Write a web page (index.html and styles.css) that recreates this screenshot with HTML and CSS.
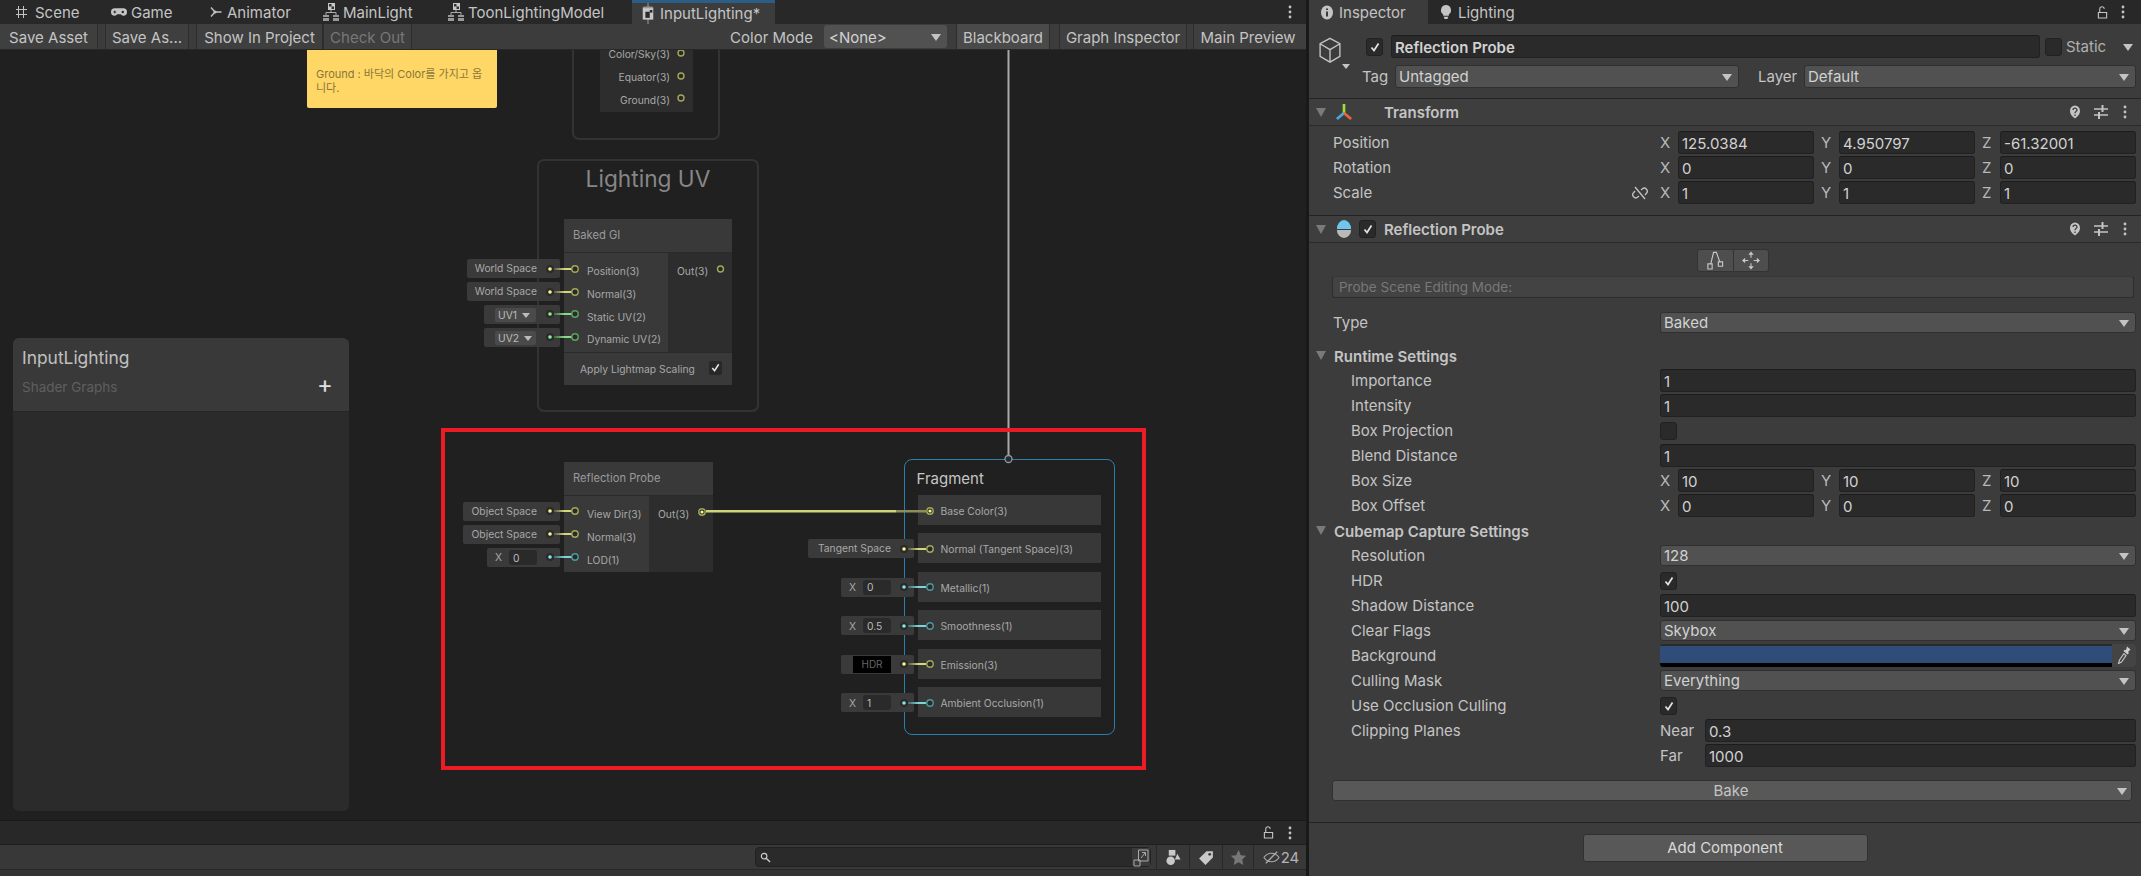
FILE: index.html

```html
<!DOCTYPE html>
<html lang="en">
<head>
    <meta charset="UTF-8">
    <title>InputLighting - Shader Graph</title>
    <link rel="stylesheet" href="styles.css">
</head>
<body>
<svg class="defs" width="0" height="0">
    <defs>
        <symbol id="i-dots" viewBox="0 0 4 14"><circle cx="2" cy="2" r="1.4"/><circle cx="2" cy="7" r="1.4"/><circle cx="2" cy="12" r="1.4"/></symbol>
        <symbol id="i-lock" viewBox="0 0 12 14"><path d="M1.5 6.5h9v6h-9zM3 6.5V3a2.5 2.5 0 0 1 5-.5" fill="none" stroke="currentColor" stroke-width="1.2"/></symbol>
        <symbol id="i-help" viewBox="0 0 12 14"><path d="M6 .5a5 5.500 0 0 1 5 5.500c0 3.500-2.500 5.500-5 7.500-2.500-2-5-4-5-7.500A5 5.500 0 0 1 6 .5z" fill="#c4c4c4"/><path d="M4 5a2 1.800 0 1 1 3 1.500c-.8.5-1 .9-1 1.700M6 9.500V11" fill="none" stroke="#3e3e3e" stroke-width="1.3"/></symbol>
        <symbol id="i-sliders" viewBox="0 0 14 16"><path d="M0 5h14M0 11h14" stroke="#c4c4c4" stroke-width="1.3"/><path d="M8.500 1v7M5 8v7" stroke="#c4c4c4" stroke-width="2"/></symbol>
        <symbol id="i-graph" viewBox="0 0 16 20"><path d="M5 1h7v7H5z" fill="#c8c8c8"/><path d="M6 2h2.500v2.500H6zM8.500 4.500H11V7H8.500z" fill="#333"/><path d="M8 8v2.500M3 13v-2.500h10V13" fill="none" stroke="#aaa"/><path d="M0 13h6v2H0zM0 16h6v3H0zM10 13h6v2h-6zM10 16h6v3h-6z" fill="#999"/></symbol>
        <symbol id="i-check" viewBox="0 0 12 12"><path d="M2.500 6.500 5 9.500l4.500-7" fill="none" stroke="#e4e4e4" stroke-width="1.7"/></symbol>
        <linearGradient id="w-y"><stop offset="0" stop-color="#5a5a40"/><stop offset=".6" stop-color="#d6d67e"/></linearGradient>
        <linearGradient id="w-c"><stop offset="0" stop-color="#3f6a6c"/><stop offset=".6" stop-color="#7fd3d6"/></linearGradient>
        <linearGradient id="w-g"><stop offset="0" stop-color="#3f6a40"/><stop offset=".6" stop-color="#86dc86"/></linearGradient>
    </defs>
</svg>

<div class="app">
    <div class="graph-win">
        <div class="tabs">
            <div class="tab">
                <svg class="tab-ico" viewBox="0 0 16 16"><path d="M3.500 2v12M8.500 2v12M1 5.500h11M1 10.500h11" stroke="#c4c4c4" fill="none"/></svg>
                Scene
            </div>
            <div class="tab">
                <svg class="tab-ico" viewBox="0 0 17 16"><path d="M4 4h9a4 4 0 0 1 0 8c-1.500 0-2-1.500-3-1.500H7C6 10.500 5.500 12 4 12a4 4 0 0 1 0-8z" fill="#c4c4c4"/><path d="M2.500 8h3M4 6.500v3" stroke="#282828"/><circle cx="12.5" cy="8" r="1.3" fill="#282828"/></svg>
                Game
            </div>
            <div class="tab">
                <svg class="tab-ico" viewBox="0 0 16 16"><path d="M4 3.500 8 8l-4 4.500M8 8h6.500" fill="none" stroke="#c4c4c4" stroke-width="1.4"/><circle cx="8" cy="8" r="1.5" fill="#c4c4c4"/></svg>
                Animator
            </div>
            <div class="tab"><svg class="tab-ico tab-ico-tall"><use href="#i-graph"/></svg>MainLight</div>
            <div class="tab"><svg class="tab-ico tab-ico-tall"><use href="#i-graph"/></svg>ToonLightingModel</div>
            <div class="tab tab-active">
                <svg class="tab-ico tab-ico-tall" viewBox="0 0 16 24"><path d="M8 0v24" stroke="#aaa"/><path d="M2 5h12v14H2z" fill="#c8c8c8"/><path d="M3 4h10v2H3z" fill="#999"/><path d="M5 10h5v7H5z" fill="#2b2b2b"/><path d="M10 8h3v3h-3z" fill="#2b2b2b"/></svg>
                InputLighting*
            </div>
            <svg class="tab-dots"><use href="#i-dots"/></svg>
        </div>

        <div class="graph-bar">
            <div class="bar-btn btn-save">Save Asset</div>
            <div class="bar-btn btn-saveas">Save As...</div>
            <div class="bar-btn btn-show">Show In Project</div>
            <div class="bar-btn btn-check">Check Out</div>
            <div class="bar-space"></div>
            <div class="color-label">Color Mode</div>
            <div class="color-drop">&lt;None&gt;<span class="arrow"></span></div>
            <div class="bar-btn btn-black">Blackboard</div>
            <div class="bar-btn btn-insp">Graph Inspector</div>
            <div class="bar-btn btn-prev">Main Preview</div>
        </div>

        <div class="canvas">
            <div class="sticky">니다.<br><br>Ground : 바닥의 Color를 가지고 옵<br>니다.</div>

            <div class="group group-top"></div>
            <div class="node node-top">
                <div class="top-port">Color/Sky(3)</div>
                <div class="top-port">Equator(3)</div>
                <div class="top-port">Ground(3)</div>
            </div>

            <div class="group group-uv"><div class="group-title">Lighting UV</div></div>
            <div class="node node-baked">
                <div class="node-title">Baked GI</div>
                <div class="node-ports">
                    <div class="ports-in ports-in-baked">
                        <div class="port-label">Position(3)</div>
                        <div class="port-label">Normal(3)</div>
                        <div class="port-label">Static UV(2)</div>
                        <div class="port-label">Dynamic UV(2)</div>
                    </div>
                    <div class="ports-out"><div class="port-label">Out(3)</div></div>
                </div>
                <div class="node-foot">Apply Lightmap Scaling<span class="mini-check"><svg><use href="#i-check"/></svg></span></div>
            </div>
            <div class="inl-col inl-baked">
                <div class="inl">World Space</div>
                <div class="inl">World Space</div>
                <div class="inl inl-x"><span class="uv-drop">UV1<span class="mini-arrow"></span></span></div>
                <div class="inl inl-x"><span class="uv-drop">UV2<span class="mini-arrow"></span></span></div>
            </div>

            <div class="node node-probe">
                <div class="node-title">Reflection Probe</div>
                <div class="node-ports">
                    <div class="ports-in ports-in-probe">
                        <div class="port-label">View Dir(3)</div>
                        <div class="port-label">Normal(3)</div>
                        <div class="port-label">LOD(1)</div>
                    </div>
                    <div class="ports-out"><div class="port-label">Out(3)</div></div>
                </div>
            </div>
            <div class="inl-col inl-probe">
                <div class="inl">Object Space</div>
                <div class="inl">Object Space</div>
                <div class="inl inl-x">X<span class="inl-field">0</span></div>
            </div>

            <div class="fragment">
                <div class="frag-title">Fragment</div>
                <div class="frag-row">Base Color(3)</div>
                <div class="frag-row">Normal (Tangent Space)(3)</div>
                <div class="frag-row">Metallic(1)</div>
                <div class="frag-row">Smoothness(1)</div>
                <div class="frag-row">Emission(3)</div>
                <div class="frag-row">Ambient Occlusion(1)</div>
            </div>
            <div class="inl-col inl-frag">
                <div class="inl">Tangent Space</div>
                <div class="inl inl-x">X<span class="inl-field">0</span></div>
                <div class="inl inl-x">X<span class="inl-field">0.5</span></div>
                <div class="inl inl-x"><span class="hdr">HDR</span></div>
                <div class="inl inl-x">X<span class="inl-field">1</span></div>
            </div>

            <svg class="wires" viewBox="0 0 1306 770">
                <rect x="1007.5" y="0" width="2" height="405" fill="#a8a8a8"/>
                <circle cx="1008.5" cy="409" r="3.5" fill="#2a2a2a" stroke="#8a9aa0" stroke-width="1.3"/>

                <g class="rings-y"><circle cx="681" cy="3" r="3"/><circle cx="681" cy="26" r="3"/><circle cx="681" cy="48" r="3"/><circle cx="720.5" cy="219" r="3"/></g>

                <rect x="554" y="218" width="18" height="2" fill="url(#w-y)"/>
                <rect x="554" y="241" width="18" height="2" fill="url(#w-y)"/>
                <rect x="554" y="263" width="18" height="2" fill="url(#w-g)"/>
                <rect x="554" y="286" width="18" height="2" fill="url(#w-g)"/>
                <rect x="554" y="460" width="18" height="2" fill="url(#w-y)"/>
                <rect x="554" y="483" width="18" height="2" fill="url(#w-y)"/>
                <rect x="554" y="506" width="18" height="2" fill="url(#w-c)"/>
                <rect x="908" y="498" width="18" height="2" fill="url(#w-y)"/>
                <rect x="908" y="536" width="18" height="2" fill="url(#w-c)"/>
                <rect x="908" y="575" width="18" height="2" fill="url(#w-c)"/>
                <rect x="908" y="613" width="18" height="2" fill="url(#w-y)"/>
                <rect x="908" y="652" width="18" height="2" fill="url(#w-c)"/>
                <rect x="706" y="460" width="190" height="2.5" fill="#d2d27c"/>
                <rect x="896" y="460" width="30" height="2.5" fill="#8e8e5c"/>

                <g class="dots">
                    <circle cx="550" cy="219" r="4"/><circle cx="550" cy="242" r="4"/><circle cx="550" cy="264" r="4"/><circle cx="550" cy="287" r="4"/>
                    <circle cx="550" cy="461" r="4"/><circle cx="550" cy="484" r="4"/><circle cx="550" cy="507" r="4"/>
                    <circle cx="904" cy="499" r="4"/><circle cx="904" cy="537" r="4"/><circle cx="904" cy="576" r="4"/><circle cx="904" cy="614" r="4"/><circle cx="904" cy="653" r="4"/>
                </g>
                <g class="in-y"><circle cx="550" cy="219" r="1.8"/><circle cx="550" cy="242" r="1.8"/><circle cx="550" cy="461" r="1.8"/><circle cx="550" cy="484" r="1.8"/><circle cx="904" cy="499" r="1.8"/><circle cx="904" cy="614" r="1.8"/></g>
                <g class="in-c"><circle cx="550" cy="507" r="1.8"/><circle cx="904" cy="537" r="1.8"/><circle cx="904" cy="576" r="1.8"/><circle cx="904" cy="653" r="1.8"/></g>
                <g class="in-g"><circle cx="550" cy="264" r="1.8"/><circle cx="550" cy="287" r="1.8"/></g>

                <g class="rings-y"><circle cx="575" cy="219" r="3.2"/><circle cx="575" cy="242" r="3.2"/><circle cx="575" cy="461" r="3.2"/><circle cx="575" cy="484" r="3.2"/><circle cx="930" cy="499" r="3.2"/><circle cx="930" cy="614" r="3.2"/><circle cx="702" cy="462" r="3.2"/><circle cx="930" cy="461" r="3.2"/></g>
                <g class="rings-g"><circle cx="575" cy="264" r="3.2"/><circle cx="575" cy="287" r="3.2"/></g>
                <g class="rings-c"><circle cx="575" cy="507" r="3.2"/><circle cx="930" cy="537" r="3.2"/><circle cx="930" cy="576" r="3.2"/><circle cx="930" cy="653" r="3.2"/></g>
                <g class="in-y"><circle cx="702" cy="462" r="1.6"/><circle cx="930" cy="461" r="1.6"/></g>
            </svg>

            <div class="blackboard">
                <div class="bb-head">
                    <div class="bb-title">InputLighting</div>
                    <div class="bb-sub">Shader Graphs<span class="bb-plus">+</span></div>
                </div>
            </div>

            <div class="red-box"></div>
        </div>

        <div class="project">
            <div class="project-tabs">
                <svg class="pr-lock"><use href="#i-lock"/></svg>
                <svg class="pr-dots"><use href="#i-dots"/></svg>
            </div>
            <div class="project-bar">
                <div class="search">
                    <svg class="search-ico" viewBox="0 0 12 12"><circle cx="4.5" cy="4.5" r="3" fill="none" stroke="#ccc" stroke-width="1.3"/><path d="m7 7 4 4" stroke="#ccc" stroke-width="1.5"/></svg>
                    <span class="search-end"><svg viewBox="0 0 16 18"><path d="M5.500 1H15v11H5.500zM1 11h6v6H1z" fill="none" stroke="#aaa"/><path d="M8 9l4-5M9 3.500h3.500V7" fill="none" stroke="#aaa"/></svg></span>
                </div>
                <div class="seg seg-a"><svg viewBox="0 0 16 18"><path d="M3 1h7v6H3z" fill="#c8c8c8"/><circle cx="5" cy="12.5" r="4.5" fill="#c8c8c8"/><path d="m12 5 3.500 6h-6z" fill="#c8c8c8"/></svg></div>
                <div class="seg seg-a"><svg viewBox="0 0 16 16"><path d="M8 2h6v6l-7 7-6-6z" fill="#c8c8c8"/><circle cx="11" cy="5" r="1.3" fill="#3a3a3a"/></svg></div>
                <div class="seg seg-b"><svg viewBox="0 0 16 16"><path d="m8 1 2.200 4.800 5 .6-3.700 3.400 1 5.200L8 12.400 3.500 15l1-5.200L.8 6.400l5-.6z" fill="#777"/></svg></div>
                <div class="seg seg-c"><svg viewBox="0 0 18 16"><path d="M1 8c2-3 5-4.500 8-4.500S15 5 17 8c-2 3-5 4.500-8 4.500S3 11 1 8z" fill="none" stroke="#aaa" stroke-width="1.2"/><path d="M3 14 15 2" stroke="#aaa" stroke-width="1.4"/></svg>24</div>
            </div>
            <div class="project-rest"></div>
        </div>
    </div>

    <div class="inspector">
        <div class="insp-tabs">
            <div class="insp-tab insp-tab-active">
                <svg class="insp-tab-ico" viewBox="0 0 12 14"><path d="M6 0a6 7 0 1 1 0 14A6 7 0 0 1 6 0z" fill="#c4c4c4"/><path d="M6 6v5M6 3v1.600" stroke="#3c3c3c" stroke-width="2"/></svg>
                Inspector
            </div>
            <div class="insp-tab">
                <svg class="insp-tab-ico" viewBox="0 0 12 16"><path d="M6 0a5.500 5.500 0 0 1 3 10v1.500H3V10A5.500 5.500 0 0 1 6 0z" fill="#c4c4c4"/><path d="M3.500 12.500h5l-1 2.500h-3z" fill="#c4c4c4"/></svg>
                Lighting
            </div>
            <svg class="ins-lock"><use href="#i-lock"/></svg>
            <svg class="ins-dots"><use href="#i-dots"/></svg>
        </div>

        <div class="go-head">
            <svg class="cube" viewBox="0 0 26 30"><path d="M13 1.500 24 7.500v14L13 28 2 21.500v-14zM2 7.500 13 14l11-6.500M13 14v14" fill="none" stroke="#c4c4c4" stroke-width="1.5"/></svg>
            <span class="cube-arrow"></span>
            <div class="go-row go-row-a">
                <span class="check check-go"><svg><use href="#i-check"/></svg></span>
                <div class="field field-name">Reflection Probe</div>
                <span class="check check-static"></span>
                <span class="static-label">Static</span>
                <span class="arrow arrow-static"></span>
            </div>
            <div class="go-row go-row-b">
                <span class="tag-label">Tag</span>
                <div class="drop drop-tag">Untagged<span class="arrow"></span></div>
                <span class="layer-label">Layer</span>
                <div class="drop drop-layer">Default<span class="arrow"></span></div>
            </div>
        </div>

        <div class="comp-head">
            <span class="fold"></span>
            <svg class="comp-ico" viewBox="0 0 18 18"><path d="M9 0v10" stroke="#a3d93a" stroke-width="3"/><path d="M9 10 1 17" stroke="#4aa8e0" stroke-width="3"/><path d="m9 10 8 7" stroke="#e8683a" stroke-width="3"/></svg>
            <span class="comp-check-gap"></span>
            <span class="comp-name">Transform</span>
            <svg class="h-help"><use href="#i-help"/></svg>
            <svg class="h-slide"><use href="#i-sliders"/></svg>
            <svg class="h-dots"><use href="#i-dots"/></svg>
        </div>
        <div class="comp-body comp-transform">
            <div class="row"><div class="lbl">Position</div><div class="vec"><div class="vec-cell"><i>X</i><div class="field">125.0384</div></div><div class="vec-cell"><i>Y</i><div class="field">4.950797</div></div><div class="vec-cell"><i>Z</i><div class="field">-61.32001</div></div></div></div>
            <div class="row"><div class="lbl">Rotation</div><div class="vec"><div class="vec-cell"><i>X</i><div class="field">0</div></div><div class="vec-cell"><i>Y</i><div class="field">0</div></div><div class="vec-cell"><i>Z</i><div class="field">0</div></div></div></div>
            <div class="row"><div class="lbl">Scale<svg class="link" viewBox="0 0 16 16"><path d="M3 6 1.800 7.500a3 3 0 0 0 4 4.500l1.200-1M9 5l1.200-1a3 3 0 0 1 4 4.500L13 10M3 2l10 12" fill="none" stroke="#c4c4c4" stroke-width="1.3"/></svg></div><div class="vec"><div class="vec-cell"><i>X</i><div class="field">1</div></div><div class="vec-cell"><i>Y</i><div class="field">1</div></div><div class="vec-cell"><i>Z</i><div class="field">1</div></div></div></div>
        </div>

        <div class="comp-head">
            <span class="fold"></span>
            <svg class="comp-ico comp-ico-probe" viewBox="0 0 18 22"><path d="M1 11a8 10 0 0 1 16 0z" fill="#6fc6ee"/><path d="M1 12h16a8 9 0 0 1-16 0z" fill="#b9b9b9"/></svg>
            <span class="check check-comp"><svg><use href="#i-check"/></svg></span>
            <span class="comp-name comp-name-probe">Reflection Probe</span>
            <svg class="h-help"><use href="#i-help"/></svg>
            <svg class="h-slide"><use href="#i-sliders"/></svg>
            <svg class="h-dots"><use href="#i-dots"/></svg>
        </div>
        <div class="comp-body comp-probe">
            <div class="edit-btns">
                <span class="edit-btn"><svg viewBox="0 0 18 20"><path d="M1.500 13.500h4.500v5.500H1.500zM12.500 11.500H17V16h-4.500zM4.500 13.500 7.500 1.500h3l3.500 10" fill="none" stroke="#c8c8c8" stroke-width="1.2"/></svg></span>
                <span class="edit-btn"><svg viewBox="0 0 20 20"><path d="M10 2v5M10 13v5M2 10h5M13 10h5" fill="none" stroke="#c8c8c8" stroke-width="1.2"/><path d="m10 0 3 3.500H7zM10 20l-3-3.500h6zM0 10l3.500-3v6zM20 10l-3.500 3V7z" fill="#c8c8c8"/></svg></span>
            </div>
            <div class="help-box">Probe Scene Editing Mode:</div>
            <div class="row row-type"><div class="lbl">Type</div><div class="drop drop-val">Baked<span class="arrow"></span></div></div>

            <div class="sect sect-first"><span class="fold"></span>Runtime Settings</div>
            <div class="row sub"><div class="lbl">Importance</div><div class="field field-val">1</div></div>
            <div class="row sub"><div class="lbl">Intensity</div><div class="field field-val">1</div></div>
            <div class="row sub"><div class="lbl">Box Projection</div><span class="check"></span></div>
            <div class="row sub"><div class="lbl">Blend Distance</div><div class="field field-val">1</div></div>
            <div class="row sub"><div class="lbl">Box Size</div><div class="vec"><div class="vec-cell"><i>X</i><div class="field">10</div></div><div class="vec-cell"><i>Y</i><div class="field">10</div></div><div class="vec-cell"><i>Z</i><div class="field">10</div></div></div></div>
            <div class="row sub"><div class="lbl">Box Offset</div><div class="vec"><div class="vec-cell"><i>X</i><div class="field">0</div></div><div class="vec-cell"><i>Y</i><div class="field">0</div></div><div class="vec-cell"><i>Z</i><div class="field">0</div></div></div></div>

            <div class="sect"><span class="fold"></span>Cubemap Capture Settings</div>
            <div class="row sub"><div class="lbl">Resolution</div><div class="drop drop-val">128<span class="arrow"></span></div></div>
            <div class="row sub"><div class="lbl">HDR</div><span class="check"><svg><use href="#i-check"/></svg></span></div>
            <div class="row sub"><div class="lbl">Shadow Distance</div><div class="field field-val">100</div></div>
            <div class="row sub"><div class="lbl">Clear Flags</div><div class="drop drop-val">Skybox<span class="arrow"></span></div></div>
            <div class="row sub"><div class="lbl">Background</div>
                <div class="color-field"><div class="swatch"></div><div class="picker"><svg viewBox="0 0 14 18"><path d="M10 0.500l3.500 3-2.500 2.500 1 1-1.500 1.500-4-3.500 1.500-1.500 1 1z" fill="#d0d0d0"/><path d="M7 7.500 2.500 14l-1 3.500 3-1.500 4.500-6.500z" fill="none" stroke="#c8c8c8" stroke-width="1.1"/></svg></div></div>
            </div>
            <div class="row sub"><div class="lbl">Culling Mask</div><div class="drop drop-val">Everything<span class="arrow"></span></div></div>
            <div class="row sub"><div class="lbl">Use Occlusion Culling</div><span class="check"><svg><use href="#i-check"/></svg></span></div>
            <div class="row sub"><div class="lbl">Clipping Planes</div><span class="near-label">Near</span><div class="field field-val">0.3</div></div>
            <div class="row sub"><div class="lbl"></div><span class="near-label">Far</span><div class="field field-val">1000</div></div>

            <div class="bake">Bake<span class="arrow"></span></div>
        </div>

        <div class="insp-foot"><div class="add-btn">Add Component</div></div>
    </div>
</div>
</body>
</html>
```

FILE: styles.css

```css
* { box-sizing: border-box; }
html, body { margin: 0; height: 100%; overflow: hidden; }
body { background: #191919; color: #c4c4c4; font: 15px/1 Inter, "Noto Sans CJK KR", sans-serif; }
.defs { position: absolute; }
svg { display: block; fill: currentColor; }
.app { display: flex; width: 2141px; height: 876px; }

/* left window */
.graph-win { width: 1306px; display: flex; flex-direction: column; }
.tabs { height: 24px; background: #282828; padding-left: 7px; display: grid; grid-template-columns: 96px 96px 116px 125px 192px 143px 1fr; align-items: center; position: relative; }
.tab { height: 24px; padding-left: 8px; display: flex; align-items: center; gap: 4px; }
.tab-active { background: #3c3c3c; border-top: 3px solid #2c5d87; }
.tab-ico { width: 16px; height: 16px; flex: none; }
.tab-ico-tall { height: 20px; }
.tab-active .tab-ico-tall { height: 21px; }
.tab-dots { position: absolute; left: 1288px; top: 5px; width: 4px; height: 14px; color: #c4c4c4; }

.graph-bar { height: 26px; background: #3c3c3c; display: flex; align-items: stretch; border-bottom: 1px solid #282828; }
.bar-btn { display: flex; align-items: center; justify-content: center; padding-top: 1px; background: #3f3f3f; border-right: 1px solid #2d2d2d; border-left: 1px solid #2d2d2d; }
.btn-save { width: 98px; border-left: 0; }
.btn-saveas { width: 84px; margin-left: 7px; }
.btn-show { width: 127px; margin-left: 7px; }
.btn-check { width: 89px; color: #777; }
.bar-space { flex: 1; }
.color-label { align-self: center; margin: 2px 11px 0 0; }
.color-drop { width: 123px; margin: 1px 0; background: #515151; border-radius: 3px; padding: 5px 0 0 5px; position: relative; color: #d2d2d2; }
.btn-black { width: 94px; margin-left: 9px; background: #4a4a4a; }
.btn-insp { width: 128px; margin-left: 9px; }
.btn-prev { width: 113px; margin-left: 6px; border-right: 0; padding-right: 4px; }

.arrow { position: absolute; right: 6px; top: 50%; margin-top: -3px; border: 5px solid transparent; border-top: 7px solid #c4c4c4; border-bottom: 0; }

/* graph canvas, a free canvas so things sit at their coordinates */
.canvas { flex: 1; background: #202020; position: relative; overflow: hidden; }
.sticky { position: absolute; left: 307px; top: -12px; width: 190px; height: 70px; padding-left: 9px; background: #ffd767; color: #8a7638; font-size: 11px; line-height: 14.3px; border-radius: 2px; }
.group { position: absolute; border: 2px solid #333; border-radius: 7px; }
.group-top { left: 572px; top: -40px; width: 148px; height: 130px; }
.group-uv { left: 537px; top: 109px; width: 222px; height: 253px; }
.group-title { text-align: center; font-size: 22.7px; color: #868686; margin-top: 7px; }

.node { position: absolute; font-size: 10.3px; color: #a8a8a8; }
.node-top { left: 600px; top: -10px; width: 93px; height: 72px; background: #2d2d2d; }
.top-port { height: 22.8px; padding-top: 9px; padding-right: 23px; text-align: right; }
.node-baked { left: 564px; top: 169px; width: 168px; }
.node-probe { left: 564px; top: 412px; width: 149px; }
.node-title { height: 34px; background: #393939; padding: 11px 0 0 9px; font-size: 11.2px; color: #9a9a9a; border-bottom: 1px solid #2a2a2a; }
.node-ports { display: flex; }
.ports-in { background: #393939; padding: 7px 0 4px 23px; }
.ports-in-baked { width: 104px; height: 99px; }
.ports-in-probe { width: 85px; height: 76px; }
.ports-out { flex: 1; background: #2d2d2d; padding: 7px 0 0 9px; }
.port-label { height: 22.8px; padding-top: 6px; white-space: nowrap; }
.node-foot { height: 33px; background: #393939; border-top: 1px solid #2a2a2a; padding-left: 16px; display: flex; align-items: center; position: relative; }
.mini-check { position: absolute; right: 10px; top: 8px; width: 13px; height: 14px; background: #282828; border-radius: 2px; padding: 1px; }
.mini-check svg { width: 11px; height: 11px; }

.inl-col { position: absolute; display: flex; flex-direction: column; align-items: flex-end; font-size: 10.3px; color: #a8a8a8; }
.inl-baked { left: 467px; top: 209px; width: 93px; gap: 4px; }
.inl-probe { left: 463px; top: 452px; width: 97px; gap: 4px; }
.inl-frag { left: 808px; top: 489px; width: 106px; gap: 19.6px; }
.inl { width: 100%; height: 19px; background: #3a3a3a; border-radius: 2px; padding-right: 23px; display: flex; align-items: center; justify-content: flex-end; white-space: nowrap; }
.inl-x { width: 73px; }
.inl-baked .inl-x { width: 76px; }
.uv-drop { width: 41px; height: 14px; background: #4a4a4a; border-radius: 2px; margin-right: 1px; padding: 1px 0 0 3px; color: #bbb; display: flex; gap: 5px; align-items: center; }
.mini-arrow { border: 4px solid transparent; border-top: 5px solid #bbb; border-bottom: 0; }
.inl-field { width: 28px; height: 15px; margin-left: 7px; padding: 1px 0 0 4px; background: #2a2a2a; border-radius: 3px; display: flex; align-items: center; color: #bbb; }
.hdr { width: 38px; height: 17px; background: #000; color: #666; font-size: 10px; display: flex; align-items: center; justify-content: center; }

.fragment { position: absolute; left: 904px; top: 409px; width: 211px; height: 276px; border: 1.5px solid #2a7fae; border-radius: 8px; padding: 0 13px 0 12.5px; font-size: 10.3px; color: #a8a8a8; }
.frag-title { height: 34.5px; padding-top: 11px; margin-left: -1px; font-size: 15px; color: #c6c6c6; }
.frag-row { height: 30px; margin-bottom: 8.6px; background: #383838; padding: 11px 0 0 23px; white-space: nowrap; }

.wires { position: absolute; left: 0; top: 0; width: 1306px; height: 770px; pointer-events: none; }
.dots circle { fill: #2a2a2a; }
.in-y circle { fill: #f6f68e; }
.in-c circle { fill: #84e4e7; }
.in-g circle { fill: #90ee90; }
.rings-y circle { fill: #2a2a2a; stroke: #a4a658; stroke-width: 1.4; }
.rings-g circle { fill: #2a2a2a; stroke: #5ba35f; stroke-width: 1.4; }
.rings-c circle { fill: #2a2a2a; stroke: #4c98a0; stroke-width: 1.4; }

.blackboard { position: absolute; left: 13px; top: 288px; width: 336px; height: 473px; background: #2b2b2b; border-radius: 6px; overflow: hidden; }
.bb-head { height: 74px; background: #393939; border-bottom: 1px solid #262626; padding: 11px 0 0 9px; }
.bb-title { font-size: 17.4px; color: #c0c0c0; }
.bb-sub { margin-top: 15px; font-size: 13.5px; color: #5f5f5f; position: relative; }
.bb-plus { position: absolute; left: 295px; top: -8px; font-size: 24px; color: #e0e0e0; }

.red-box { position: absolute; left: 441px; top: 378px; width: 705px; height: 342px; border: 4px solid #ed1c24; }

/* project strip */
.project { height: 56px; display: flex; flex-direction: column; }
.project-tabs { height: 25px; background: #282828; border-top: 1px solid #1a1a1a; border-bottom: 1px solid #1f1f1f; position: relative; }
.pr-lock { position: absolute; left: 1263px; top: 5px; width: 11px; height: 14px; color: #c4c4c4; }
.pr-dots { position: absolute; left: 1288px; top: 5px; width: 4px; height: 14px; color: #c4c4c4; }
.project-bar { height: 25px; background: #383838; border-bottom: 1px solid #282828; display: flex; justify-content: flex-end; align-items: stretch; }
.search { width: 396px; height: 20px; margin: 2px 5px 0 0; background: #2a2a2a; border: 1px solid #212121; border-radius: 4px; position: relative; }
.search-ico { position: absolute; left: 4px; top: 4px; width: 11px; height: 11px; }
.search-end { position: absolute; right: 0; top: 0; width: 18px; height: 18px; background: #3a3a3a; padding: 1px; }
.seg { border-left: 1px solid #282828; display: flex; align-items: center; justify-content: center; }
.seg-a { width: 33px; }
.seg-b { width: 31px; }
.seg-c { width: 53px; gap: 1px; padding-left: 2px; color: #b4b4b4; }
.seg svg { width: 17px; height: 17px; }
.project-rest { flex: 1; background: #333; }

/* inspector */
.inspector { width: 832px; margin-left: 3px; display: flex; flex-direction: column; background: #3c3c3c; }
.insp-tabs { height: 24px; background: #282828; display: flex; position: relative; }
.insp-tab { display: flex; align-items: center; gap: 6px; padding-left: 12px; width: 119px; }
.insp-tab-active { background: #3c3c3c; }
.insp-tab-ico { width: 12px; height: 15px; }
.ins-lock { position: absolute; left: 788px; top: 6px; width: 11px; height: 14px; color: #c4c4c4; }
.ins-dots { position: absolute; left: 812px; top: 5px; width: 4px; height: 14px; color: #c4c4c4; }

.go-head { height: 75px; border-bottom: 1px solid #232323; padding-top: 11px; position: relative; }
.cube { position: absolute; left: 8px; top: 13px; width: 26px; height: 27px; }
.cube-arrow { position: absolute; left: 33px; top: 40px; border: 4px solid transparent; border-top: 5px solid #c4c4c4; border-bottom: 0; }
.go-row { display: flex; align-items: center; height: 23px; position: relative; }
.go-row-a { padding-left: 57px; }
.go-row-b { margin-top: 7px; padding-left: 53px; }
.check { width: 17px; height: 18px; flex: none; background: #2a2a2a; border: 1px solid #212121; border-radius: 3px; padding: 2px; }
.check svg { width: 12px; height: 12px; }
.check-go { margin-right: 8px; }
.field { height: 23px; flex: 1; min-width: 0; background: #2a2a2a; border: 1px solid #212121; border-top-color: #1c1c1c; border-radius: 3px; padding: 4px 0 0 3px; color: #d2d2d2; white-space: nowrap; }
.field-name { flex: none; width: 649px; font-weight: 600; }
.check-static { margin-left: 5px; }
.static-label { margin-left: 4px; color: #b0b0b0; }
.arrow-static { right: 8px; }
.tag-label { width: 33px; }
.layer-label { width: 46px; margin-left: 19px; }
.drop { height: 21px; background: #515151; border: 1px solid #303030; border-radius: 3px; position: relative; padding: 2px 0 0 3px; color: #d2d2d2; line-height: 16px; }
.drop-tag { width: 344px; height: 23px; padding-top: 3px; }
.drop-layer { width: 332px; height: 23px; padding-top: 3px; }
.drop-val { flex: 1; }

.comp-head { height: 27px; background: #3e3e3e; border-bottom: 1px solid #2a2a2a; display: flex; align-items: center; padding-left: 7px; position: relative; }
.fold { width: 0; height: 0; border: 5px solid transparent; border-top: 9px solid #7a7a7a; border-bottom: 0; flex: none; }
.comp-ico { width: 16px; height: 18px; margin-left: 10px; }
.comp-ico-probe { height: 20px; }
.comp-check-gap { width: 32px; }
.check-comp { margin-left: 7px; }
.comp-name { font-weight: 600; }
.comp-name-probe { margin-left: 8px; }
.h-help { position: absolute; left: 760px; top: 6px; width: 12px; height: 14px; }
.h-slide { position: absolute; left: 785px; top: 5px; width: 14px; height: 16px; }
.h-dots { position: absolute; left: 814px; top: 6px; width: 4px; height: 14px; color: #c4c4c4; }

.comp-body { padding-right: 5px; border-bottom: 1px solid #232323; }
.comp-transform { padding-top: 5px; height: 90px; padding-left: 24px; }
.comp-probe { border-bottom: 0; padding-top: 6px; padding-left: 24px; flex: 1; }
.row { height: 25px; padding-bottom: 2px; display: flex; align-items: center; }
.lbl { width: 327px; flex: none; position: relative; }
.sub .lbl { padding-left: 18px; }
.link { position: absolute; left: 299px; top: 0; width: 16px; height: 16px; }
.vec { flex: 1; display: grid; grid-template-columns: repeat(3, 1fr); gap: 7px; }
.vec-cell { display: flex; align-items: center; }
.vec-cell i { font-style: normal; width: 18px; flex: none; color: #b8b8b8; }
.near-label { width: 45px; flex: none; }
.row-type { margin-top: 13px; }

.edit-btns { display: flex; width: 72px; height: 23px; margin-left: 364px; }
.edit-btn { flex: 1; background: #4e4e4e; border: 1px solid #333; border-radius: 3px 0 0 3px; display: flex; align-items: center; justify-content: center; }
.edit-btn + .edit-btn { border-radius: 0 3px 3px 0; border-left: 0; }
.edit-btn svg { width: 18px; height: 19px; }
.help-box { height: 22px; width: 802px; margin: 4px 0 0 -1px; background: #434343; border: 1px solid #2d2d2d; border-top-color: #383838; border-radius: 3px; padding: 4px 0 0 6px; font-size: 13.5px; color: #787878; }
.sect { height: 25px; margin-left: -17px; display: flex; align-items: center; gap: 8px; font-weight: 600; }
.sect-first { margin-top: 8px; }
.sect .fold { margin-top: -3px; }

.color-field { flex: 1; height: 23px; display: flex; background: #2a2a2a; border-radius: 3px; overflow: hidden; }
.swatch { flex: 1; margin-top: 2px; border-bottom: 4px solid #000; background: #2f4d78; }
.picker { width: 24px; background: #444; padding: 2px 5px; }
.picker svg { width: 14px; height: 18px; }

.bake { height: 21px; width: 800px; margin: 11px 0 0 -1px; background: #585858; border: 1px solid #303030; border-radius: 3px; text-align: center; line-height: 19px; position: relative; padding-right: 2px; }
.bake .arrow { right: 4px; }

.insp-foot { height: 54px; border-top: 1px solid #232323; padding-top: 11px; display: flex; justify-content: center; }
.add-btn { width: 285px; height: 28px; background: #585858; border: 1px solid #303030; border-radius: 3px; text-align: center; line-height: 26px; color: #d8d8d8; }
```
